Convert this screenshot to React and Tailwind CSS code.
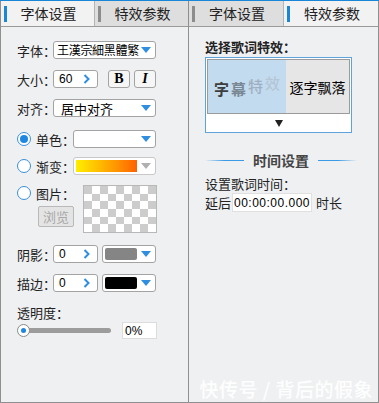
import React from 'react';

const font = { fontFamily: '"Noto Sans CJK SC", "Liberation Sans", sans-serif' };

// small blue caret used by drop-down boxes
function Caret({ color = '#2f8ee0' }) {
  return (
    <svg width="10" height="6" viewBox="0 0 10 6" className="shrink-0">
      <path d="M0 0 L10 0 L5 6 Z" fill={color} />
    </svg>
  );
}

function Chevron() {
  return (
    <svg width="7" height="10" viewBox="0 0 7 10" className="shrink-0">
      <path d="M1.5 1 L5.5 5 L1.5 9" stroke="#2f8ee0" strokeWidth="2" fill="none" />
    </svg>
  );
}

function Tab({ label, active }) {
  return (
    <div
      className={`flex-1 h-full flex items-center relative ${
        active ? 'bg-[#f2f2f3]' : 'bg-[#dedede]'
      }`}
    >
      <div className={`ml-[3px] w-[3px] h-[16px] ${active ? 'bg-[#1a86d8]' : 'bg-[#8c8c8c]'}`} />
      <span className="flex-1 text-center text-[14px] text-[#222] pr-[4px]">{label}</span>
    </div>
  );
}

function Tabs({ active }) {
  return (
    <div className="h-[26px] flex border-b border-[#9a9a9a]">
      <Tab label="字体设置" active={active === 0} />
      <div className="w-px bg-[#b5b5b5]" />
      <Tab label="特效参数" active={active === 1} />
    </div>
  );
}

function Select({ value, className = '', textClass = 'text-[13px] pl-0' }) {
  return (
    <div
      className={`h-[18px] bg-white border border-[#a3a3a3] rounded-[3px] flex items-center pl-[3px] pr-[4px] ${className}`}
    >
      <span className={`flex-1 leading-none text-black whitespace-nowrap ${textClass}`}>{value}</span>
      <Caret />
    </div>
  );
}

function NumBox({ value }) {
  return (
    <div className="w-[45px] h-[18px] bg-white border border-[#a3a3a3] rounded-[3px] flex items-center pl-[5px] pr-[7px]">
      <span className="flex-1 text-[12px] leading-none" style={{ fontFamily: '"Liberation Sans", sans-serif' }}>{value}</span>
      <Chevron />
    </div>
  );
}

function ColorBox({ color }) {
  return (
    <div className="w-[54px] h-[18px] bg-white border border-[#a3a3a3] rounded-[3px] flex items-center p-[2px] pr-[4px] gap-[4px]">
      <div className="w-[35px] h-full rounded-[2px]" style={{ backgroundColor: color }} />
      <Caret />
    </div>
  );
}

function Radio({ checked }) {
  return (
    <div className="w-[14px] h-[14px] rounded-full border border-[#3a8fd8] bg-white flex items-center justify-center shrink-0">
      {checked && <div className="w-[8px] h-[8px] rounded-full bg-[#1f87e0]" />}
    </div>
  );
}

function Label({ children, className = '' }) {
  return <span className={`text-[13px] leading-none text-[#222] whitespace-nowrap ${className}`}>{children}</span>;
}

function Checker() {
  const cells = [];
  for (let r = 0; r < 6; r++) {
    for (let c = 0; c < 9; c++) {
      cells.push(
        <div key={`${r}-${c}`} className={(r + c) % 2 === 0 ? 'bg-[#cccccc]' : 'bg-white'} />
      );
    }
  }
  return (
    <div className="w-[74px] h-[48px] border border-[#b8b8b8] grid grid-cols-9 grid-rows-6 overflow-hidden">
      {cells}
    </div>
  );
}

function LeftPanel() {
  return (
    <div className="w-[189px] h-full flex flex-col border-l border-r border-[#8f8f8f] bg-[#eff0f2]">
      <Tabs active={0} />
      <div className="flex flex-col pl-[16px] pt-[14px]">
        <div className="flex items-center h-[18px]">
          <Label className="w-[36px]">字体：</Label>
          <Select value="王漢宗細黑體繁" className="w-[103px]" textClass="text-[12px] tracking-[-0.3px]" />
        </div>
        <div className="flex items-center h-[18px] mt-[11px]">
          <Label className="w-[36px]">大小：</Label>
          <NumBox value="60" />
          <div className="ml-[10px] w-[22px] h-[18px] border border-[#a3a3a3] rounded-[3px] bg-[#f6f6f6] flex items-center justify-center">
            <span className="text-[14px] font-bold leading-none" style={{ fontFamily: '"Liberation Serif", serif' }}>B</span>
          </div>
          <div className="ml-[4px] w-[22px] h-[18px] border border-[#a3a3a3] rounded-[3px] bg-[#f6f6f6] flex items-center justify-center">
            <span className="text-[14px] font-bold italic leading-none" style={{ fontFamily: '"Liberation Serif", serif' }}>I</span>
          </div>
        </div>
        <div className="flex items-center h-[18px] mt-[11px]">
          <Label className="w-[36px]">对齐：</Label>
          <Select value="居中对齐" className="w-[103px]" textClass="text-[13px] pl-[4px]" />
        </div>

        <div className="flex items-center h-[18px] mt-[13px]">
          <Radio checked />
          <Label className="ml-[5px] w-[37px]">单色：</Label>
          <Select value="" className="w-[83px]" />
        </div>
        <div className="flex items-center h-[18px] mt-[9px]">
          <Radio />
          <Label className="ml-[5px] w-[37px]">渐变：</Label>
          <div className="w-[83px] h-[18px] bg-white border border-[#c8c8c8] rounded-[3px] flex items-center p-[2px] pr-[4px] gap-[4px]">
            <div className="flex-1 h-full bg-gradient-to-r from-[#ffee00] to-[#ff6000]" />
            <Caret color="#b0b0b0" />
          </div>
        </div>
        <div className="flex mt-[9px]">
          <div className="flex flex-col">
            <div className="flex items-center h-[18px]">
              <Radio />
              <Label className="ml-[5px]">图片：</Label>
            </div>
            <div className="ml-[21px] mt-[4px] w-[36px] h-[21px] border border-[#b9b9b9] rounded-[2px] bg-[#e4e4e4] flex items-center justify-center">
              <span className="text-[13px] text-[#a8a8a8] leading-none">浏览</span>
            </div>
          </div>
          <div className="ml-[8px] mt-[1px]">
            <Checker />
          </div>
        </div>

        <div className="flex items-center h-[18px] mt-[12px]">
          <Label className="w-[36px]">阴影：</Label>
          <NumBox value="0" />
          <div className="ml-[4px]"><ColorBox color="#858585" /></div>
        </div>
        <div className="flex items-center h-[18px] mt-[11px]">
          <Label className="w-[36px]">描边：</Label>
          <NumBox value="0" />
          <div className="ml-[4px]"><ColorBox color="#000000" /></div>
        </div>

        <Label className="mt-[14px]">透明度：</Label>
        <div className="flex items-center mt-[3px] h-[17px]">
          <div className="relative w-[94px] h-[13px] flex items-center">
            <div className="w-full h-[5px] rounded-full bg-[#9c9c9c] ml-[2px]" />
            <div className="absolute left-0 top-0 w-[13px] h-[13px] rounded-full border border-[#8a8a8a] bg-white flex items-center justify-center">
              <div className="w-[5px] h-[5px] rounded-full bg-[#1f87e0]" />
            </div>
          </div>
          <div className="ml-[11px] w-[35px] h-[17px] bg-white border border-[#dcdcdc] flex items-center pl-[2px]">
            <span className="text-[12px] leading-none" style={{ fontFamily: '"Liberation Sans", sans-serif' }}>0%</span>
          </div>
        </div>
      </div>
    </div>
  );
}

function RightPanel() {
  return (
    <div className="w-[190px] h-full flex flex-col border-r border-[#8f8f8f] bg-[#eff0f2] relative">
      <Tabs active={1} />
      <div className="flex flex-col pl-[16px] pt-[13px]">
        <span className="text-[13px] font-bold leading-none text-[#222]">选择歌词特效：</span>
        <div className="mt-[4px] w-[147px] border border-[#5fa3dc] bg-white flex flex-col">
          <div className="m-px h-[55px] border border-[#9b9b9b] flex">
            <div className="w-[78px] bg-[#c3dbef] flex items-center justify-center text-[15px] font-bold leading-none pt-[4px]">
              <span className="text-[#3d3d3d]">字</span>
              <span className="text-[#7a8894] ml-[2px]">幕</span>
              <span className="text-[#9eb0c0] ml-[2px] -translate-y-[3px] font-medium">特</span>
              <span className="text-[#b4c6d6] ml-[2px] -translate-y-[6px] font-medium">效</span>
            </div>
            <div className="flex-1 bg-[#e6e6e6] flex items-center justify-center">
              <span className="text-[14px] leading-none text-black">逐字飘落</span>
            </div>
          </div>
          <div className="h-[17px] flex items-center justify-center">
            <svg width="8" height="7" viewBox="0 0 8 7"><path d="M0 0 L8 0 L4 7 Z" fill="#222" /></svg>
          </div>
        </div>

        <div className="flex items-center mt-[20px] w-[152px]">
          <div className="flex-1 h-px bg-gradient-to-r from-transparent via-[#3a9ae6] to-[#3a9ae6]" />
          <span className="mx-[9px] text-[14px] font-bold leading-none text-[#444]">时间设置</span>
          <div className="flex-1 h-px bg-gradient-to-r from-[#3a9ae6] via-[#3a9ae6] to-transparent" />
        </div>

        <span className="mt-[10px] text-[13px] leading-none text-[#222]">设置歌词时间：</span>
        <div className="flex items-center mt-[3px] h-[19px]">
          <Label>延后</Label>
          <div className="ml-[1px] w-[80px] h-[19px] bg-white border border-[#e0e0e0] flex items-center justify-center">
            <span className="text-[12px] leading-none tracking-[0.5px]" style={{ fontFamily: '"Liberation Sans", sans-serif' }}>00:00:00.000</span>
          </div>
          <Label className="ml-[4px]">时长</Label>
        </div>
      </div>
      <div className="absolute right-[5px] bottom-[4px] text-[19px] font-medium tracking-[0.5px] text-white/90 leading-none whitespace-nowrap">
        快传号 / 背后的假象
      </div>
    </div>
  );
}

export default function App() {
  return (
    <div className="w-[379px] h-[403px] flex flex-col bg-[#eff0f2]" style={font}>
      <div className="h-px bg-[#1a86d8]" />
      <div className="flex-1 flex border-b border-[#8f8f8f] min-h-0">
        <LeftPanel />
        <RightPanel />
      </div>
    </div>
  );
}
